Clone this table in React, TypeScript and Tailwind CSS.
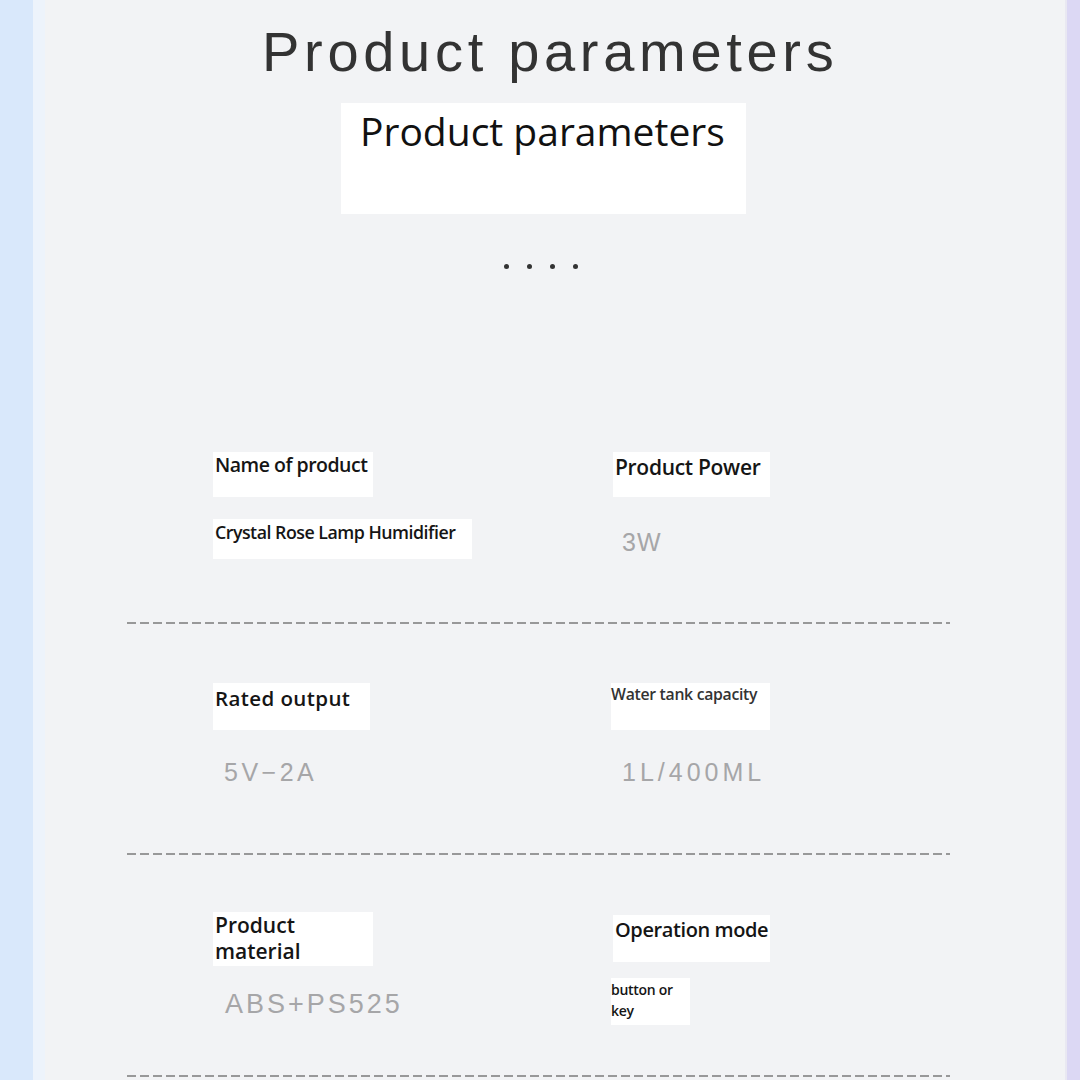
import React from "react";

const label = "font-['Open_Sans','Noto_Sans',sans-serif] font-semibold text-[#151515]";
const value = "font-['Liberation_Sans',Arial,sans-serif] text-[#a6a6a8]";

function Dashed() {
  return (
    <div className="ml-[82px] w-[823px] h-[2px] bg-[repeating-linear-gradient(90deg,#7a7a7a_0_9px,transparent_9px_13px)] opacity-75" />
  );
}

export default function App() {
  return (
    <div className="w-[1080px] h-[1080px] flex overflow-hidden bg-[#f2f3f5]">
      <div className="w-[33px] bg-[#d9e8fb]" />
      <div className="w-[12px] bg-[#edf3fb]" />
      <div className="flex-1 flex flex-col">
        <div className="mt-[22px] ml-[217px] font-['Liberation_Sans',Arial,sans-serif] text-[56px] leading-[60px] tracking-[4.7px] text-[#333]">
          Product parameters
        </div>
        <div className="mt-[21px] ml-[296px] w-[405px] h-[111px] bg-white pl-[19px] pt-[2px]">
          <div className="font-['Open_Sans','Noto_Sans',sans-serif] text-[#111] text-[39px] leading-[52px]">Product parameters</div>
        </div>
        <div className="mt-[50px] ml-[459px] flex gap-[18px]">
          <span className="w-[5px] h-[5px] rounded-full bg-[#333]" />
          <span className="w-[5px] h-[5px] rounded-full bg-[#333]" />
          <span className="w-[5px] h-[5px] rounded-full bg-[#333]" />
          <span className="w-[5px] h-[5px] rounded-full bg-[#333]" />
        </div>

        {/* Row 1 */}
        <div className="mt-[183px] ml-[168px] grid grid-cols-[400px_1fr] h-[170px]">
          <div className="flex flex-col">
            <div className={`w-[160px] h-[45px] bg-white pl-[2px] ${label} text-[19.5px] leading-[26px] tracking-[-0.5px]`}>Name of product</div>
            <div className={`mt-[22px] w-[259px] h-[40px] bg-white pl-[2px] ${label} text-[17.8px] leading-[26px] tracking-[-0.5px]`}>Crystal Rose Lamp Humidifier</div>
          </div>
          <div className="flex flex-col">
            <div className={`w-[157px] h-[45px] bg-white pl-[2px] ${label} text-[21px] leading-[30px] tracking-[-0.3px]`}>Product Power</div>
            <div className={`mt-[30px] ml-[9px] ${value} text-[25px] leading-[30px] tracking-[1px]`}>3W</div>
          </div>
        </div>
        <Dashed />

        {/* Row 2 */}
        <div className="mt-[59px] ml-[168px] grid grid-cols-[398px_1fr] h-[170px]">
          <div className="flex flex-col">
            <div className={`w-[157px] h-[47px] bg-white pl-[2px] ${label} text-[20.5px] leading-[30px] tracking-[0.4px]`}>Rated output</div>
            <div className={`mt-[27px] ml-[11px] ${value} text-[25px] leading-[30px] tracking-[3.5px]`}>5V−2A</div>
          </div>
          <div className="flex flex-col">
            <div className="w-[159px] h-[47px] bg-white font-['Open_Sans','Noto_Sans',sans-serif] font-semibold text-[15.8px] leading-[22px] text-[#333] tracking-[-0.3px]">Water tank capacity</div>
            <div className={`mt-[27px] ml-[11px] ${value} text-[25px] leading-[30px] tracking-[4px]`}>1L/400ML</div>
          </div>
        </div>
        <Dashed />

        {/* Row 3 */}
        <div className="mt-[57px] ml-[168px] grid grid-cols-[398px_1fr] h-[163px]">
          <div className="flex flex-col">
            <div className={`w-[160px] h-[54px] bg-white pl-[2px] ${label} text-[21px] leading-[26px]`}>
              Product
              <br />
              material
            </div>
            <div className={`mt-[22px] ml-[12px] ${value} text-[27px] leading-[32px] tracking-[3px]`}>ABS+PS525</div>
          </div>
          <div className="flex flex-col">
            <div className={`ml-[2px] mt-[3px] w-[157px] h-[47px] bg-white pl-[2px] ${label} text-[20px] leading-[30px] tracking-[-0.4px]`}>Operation mode</div>
            <div className={`mt-[16px] w-[79px] h-[47px] bg-white ${label} text-[14px] leading-[21px] pt-[1px] tracking-[-0.3px]`}>
              button or
              <br />
              key
            </div>
          </div>
        </div>
        <Dashed />
      </div>
      <div className="w-[2px] bg-[#e9e8f2]" />
      <div className="w-[13px] bg-[#dcd8f4]" />
    </div>
  );
}
